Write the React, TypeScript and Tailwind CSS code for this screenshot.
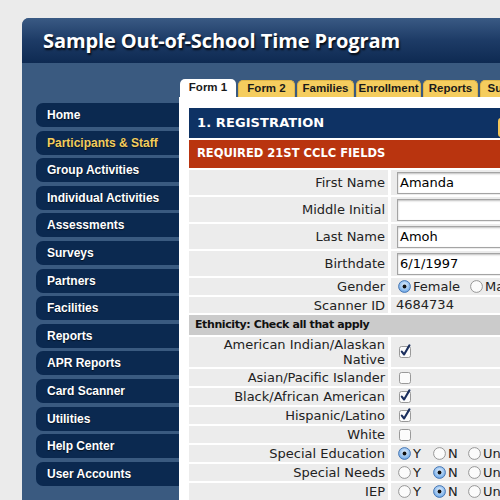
import React from "react";

const navItems = [
  "Home",
  "Participants & Staff",
  "Group Activities",
  "Individual Activities",
  "Assessments",
  "Surveys",
  "Partners",
  "Facilities",
  "Reports",
  "APR Reports",
  "Card Scanner",
  "Utilities",
  "Help Center",
  "User Accounts",
];

function Radio({ on }: { on?: boolean }) {
  return (
    <svg width="13" height="13" viewBox="0 0 13 13" className="shrink-0">
      <defs>
        <radialGradient id="rg" cx="50%" cy="40%" r="60%">
          <stop offset="0%" stopColor="#e8f3ff" />
          <stop offset="100%" stopColor="#6aa6e6" />
        </radialGradient>
      </defs>
      {on ? (
        <>
          <circle cx="6.5" cy="6.5" r="5.9" fill="url(#rg)" stroke="#3f6fae" strokeWidth="0.9" />
          <circle cx="6.5" cy="6.5" r="1.9" fill="#111" />
        </>
      ) : (
        <circle cx="6.5" cy="6.5" r="5.9" fill="#fbfbfb" stroke="#8c8c8c" strokeWidth="0.9" />
      )}
    </svg>
  );
}

function Check({ on }: { on?: boolean }) {
  return (
    <svg width="14" height="14" viewBox="0 0 14 14" className="shrink-0 mt-[-2px]">
      <rect x="1.5" y="2.5" width="11" height="11" rx="2" fill="#fbfbfb" stroke="#8f8f8f" strokeWidth="0.9" />
      {on && (
        <path d="M3.8 7.6 L6.1 10.5 L11.4 1.4" fill="none" stroke="#1b2f5e" strokeWidth="2.1" strokeLinecap="round" strokeLinejoin="round" />
      )}
    </svg>
  );
}

function Row({
  label,
  h,
  children,
}: {
  label: React.ReactNode;
  h: string;
  children?: React.ReactNode;
}) {
  return (
    <div className={`flex gap-[3px] mt-[2px] ${h}`}>
      <div className="w-[199px] shrink-0 bg-[#ececec] flex items-center justify-end pr-[3px] text-right leading-[15px]">
        {label}
      </div>
      <div className="flex-1 bg-[#ececec] flex items-center pl-[7px]">{children}</div>
    </div>
  );
}

function TextInput({ value }: { value: string }) {
  return (
    <div className="w-[200px] h-[22px] ml-[-1px] bg-white border border-[#a4a4a4] shadow-[inset_0_1px_2px_rgba(0,0,0,0.25)] flex items-center pl-[2px] text-[13px] text-black">
      {value}
    </div>
  );
}

function YNU({ sel }: { sel: number }) {
  const opts = ["Y", "N", "Unknown"];
  return (
    <div className="flex items-center">
      {opts.map((o, i) => (
        <div key={o} className="w-[35px] flex items-center gap-[2px] shrink-0">
          <Radio on={sel === i} />
          <span>{o}</span>
        </div>
      ))}
    </div>
  );
}

export default function App() {
  const tabs = [
    { t: "Form 1", w: "w-[56px]", active: true },
    { t: "Form 2", w: "w-[57px]" },
    { t: "Families", w: "w-[57px]" },
    { t: "Enrollment", w: "w-[65px]" },
    { t: "Reports", w: "w-[55px]" },
    { t: "Surveys", w: "w-[60px]" },
  ];
  return (
    <div className="w-[500px] h-[500px] overflow-hidden bg-[#ebebeb] pl-[22px] pt-[18px]">
      <div className="w-[620px] h-[600px] rounded-tl-[7px] overflow-hidden bg-[#3a5a80] flex flex-col">
        <div className="h-[45px] shrink-0 bg-gradient-to-b from-[#3a5a84] via-[#1d3b66] to-[#0e2a52] flex items-center pl-[21px]">
          <span className="font-['Open_Sans',sans-serif] font-bold text-[20px] tracking-[-0.1px] text-white [text-shadow:1px_2px_2px_rgba(0,0,0,0.85)]">
            Sample Out-of-School Time Program
          </span>
        </div>
        <div className="flex flex-1">
          <nav className="w-[157px] shrink-0 pl-[14px] pt-[40px] flex flex-col gap-[3.6px]">
            {navItems.map((n) => (
              <div
                key={n}
                className={`h-[24px] rounded-l-[7px] bg-[#0b2950] pl-[11px] flex items-center font-['Liberation_Sans',Arial,sans-serif] font-bold text-[12px] [text-shadow:0_1px_1px_rgba(0,0,0,0.6)] ${
                  n === "Participants & Staff" ? "text-[#f3cd5c]" : "text-white"
                }`}
              >
                {n}
              </div>
            ))}
          </nav>
          <main className="flex-1 pt-[17px] flex flex-col">
            <div className="h-[17px] flex items-end gap-[2px] pl-[1px]">
              {tabs.map((t) => (
                <div
                  key={t.t}
                  className={`${t.w} shrink-0 h-[17px] rounded-t-[5px] flex items-center justify-center font-['Liberation_Sans',Arial,sans-serif] font-bold text-[11.5px] text-[#1a1a1a] ${
                    t.active ? "bg-white h-[18px]" : "bg-[#f5cd5e] border-t border-x border-[#e2b84a]"
                  }`}
                >
                  {t.t}
                </div>
              ))}
            </div>
            <div className="flex-1 bg-white pl-[10px] pt-[11px] font-['DejaVu_Sans',Verdana,sans-serif] text-[13px] text-[#222]">
              <div className="relative h-[30px] bg-[#0e3264] flex items-center pl-[8px] font-bold text-[13px] text-white tracking-[0.1px]">
                1. REGISTRATION
                <div className="absolute left-[309px] top-[10px] w-[24px] h-[19px] rounded-[3px] bg-[#f2c55a]" />
              </div>
              <div className="mt-[2px] h-[28px] bg-[#b9340f] flex items-center pl-[8px] font-bold text-[11.5px] text-white">
                REQUIRED 21ST CCLC FIELDS
              </div>
              <Row label="First Name" h="h-[25px]">
                <TextInput value="Amanda" />
              </Row>
              <Row label="Middle Initial" h="h-[25px]">
                <TextInput value="" />
              </Row>
              <Row label="Last Name" h="h-[25px]">
                <TextInput value="Amoh" />
              </Row>
              <Row label="Birthdate" h="h-[25px]">
                <TextInput value="6/1/1997" />
              </Row>
              <Row label="Gender" h="h-[17px]">
                <div className="flex items-center">
                  <div className="w-[72px] flex items-center gap-[2px] shrink-0">
                    <Radio on />
                    <span>Female</span>
                  </div>
                  <div className="flex items-center gap-[2px] shrink-0">
                    <Radio />
                    <span>Male</span>
                  </div>
                </div>
              </Row>
              <Row label="Scanner ID" h="h-[16px]">
                <span className="ml-[-2px]">4684734</span>
              </Row>
              <div className="mt-[2px] h-[20px] bg-[#cbcbcb] flex items-center pl-[6px] font-bold text-[11px] tracking-[-0.4px] text-[#111]">
                Ethnicity: Check all that apply
              </div>
              <Row
                label={
                  <span>
                    American Indian/Alaskan
                    <br />
                    Native
                  </span>
                }
                h="h-[30px]"
              >
                <Check on />
              </Row>
              <Row label="Asian/Pacific Islander" h="h-[17px]">
                <Check />
              </Row>
              <Row label="Black/African American" h="h-[17px]">
                <Check on />
              </Row>
              <Row label="Hispanic/Latino" h="h-[17px]">
                <Check on />
              </Row>
              <Row label="White" h="h-[17px]">
                <Check />
              </Row>
              <Row label="Special Education" h="h-[17px]">
                <YNU sel={0} />
              </Row>
              <Row label="Special Needs" h="h-[17px]">
                <YNU sel={1} />
              </Row>
              <Row label="IEP" h="h-[17px]">
                <YNU sel={1} />
              </Row>
            </div>
          </main>
        </div>
      </div>
    </div>
  );
}
